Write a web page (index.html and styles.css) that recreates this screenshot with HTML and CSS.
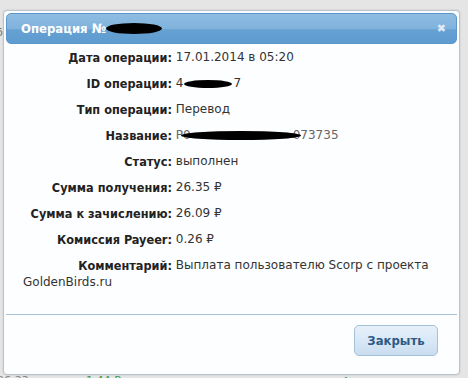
FILE: index.html
```html
<!DOCTYPE html>
<html lang="ru">
<head>
    <meta charset="UTF-8">
    <title>Операция</title>
    <link rel="stylesheet" href="styles.css">
</head>
<body>
    <div class="page">
        <div class="page-edge">б</div>

        <div class="dialog">
            <div class="titlebar">
                <span class="title">Операция №</span><span class="blob blob-title"></span>
                <span class="close">&#10006;</span>
            </div>

            <div class="content">
                <p class="row"><span class="label">Дата операции:</span> 17.01.2014 в 05:20</p>
                <p class="row"><span class="label">ID операции:</span> <span class="masked">4<span class="blob blob-id"></span>7</span></p>
                <p class="row"><span class="label">Тип операции:</span> Перевод</p>
                <p class="row"><span class="label">Название:</span> <span class="masked muted">P0<span class="blob blob-name"></span>073735</span></p>
                <p class="row"><span class="label">Статус:</span> выполнен</p>
                <p class="row"><span class="label">Сумма получения:</span> 26.35 ₽</p>
                <p class="row"><span class="label">Сумма к зачислению:</span> 26.09 ₽</p>
                <p class="row"><span class="label">Комиссия Payeer:</span> 0.26 ₽</p>
                <p class="row"><span class="label">Комментарий:</span> Выплата пользователю Scorp с проекта GoldenBirds.ru</p>
            </div>

            <div class="buttonpane">
                <button class="btn-close">Закрыть</button>
            </div>
        </div>

        <div class="page-row">
            <span class="time">06:23</span>
            <span class="sum">1.44 ₽</span>
            <span class="check">&#10004;</span>
        </div>
    </div>
</body>
</html>
```

FILE: styles.css
```css
* {
    margin: 0;
    padding: 0;
    box-sizing: border-box;
}

body {
    font-family: 'DejaVu Sans', Verdana, sans-serif;
    background: #e5e5e5;
    width: 468px;
    height: 378px;
    overflow: hidden;
}

.page {
    position: relative;
    padding: 10px 8px 0 3px;
}

.page-edge {
    position: absolute;
    left: -4px;
    top: 26px;
    font-size: 11px;
    color: #777;
}

.dialog {
    position: relative;
    width: 457px;
    background: #fdfeff;
    border: 1px solid #b9c3cc;
    border-radius: 4px;
    padding: 2px;
    box-shadow: 0 0 2px rgba(0, 0, 0, 0.15);
}

.titlebar {
    display: flex;
    align-items: center;
    height: 31px;
    padding: 0 10px 0 14px;
    border: 1px solid #5d97c9;
    border-radius: 5px;
    background: linear-gradient(#8fbde2 0%, #80b2dc 50%, #66a1d3 55%, #5e9bd0 100%);
    color: #fff;
}

.title {
    font-family: 'DejaVu Sans Condensed', 'DejaVu Sans', sans-serif;
    font-weight: bold;
    font-size: 13px;
}

.close {
    margin-left: auto;
    font-size: 11px;
    color: #dfeaf5;
}

.blob {
    display: inline-block;
    background: #000;
    border-radius: 50%;
    filter: blur(0.6px);
    vertical-align: middle;
}

.blob-title {
    width: 56px;
    height: 11px;
    margin-left: 0;
}

.blob-id {
    width: 48px;
    height: 8px;
    margin: 0 1px;
}

.blob-name {
    width: 120px;
    height: 9px;
    margin-left: -10px;
    margin-right: -8px;
}

.masked {
    position: relative;
}

.muted {
    color: #666;
}

.content {
    padding: 5px 14px 14px 17px;
    height: 270px;
}

.row {
    font-size: 12px;
    line-height: 17px;
    margin-bottom: 9px;
    color: #333;
}

.label {
    display: inline-block;
    vertical-align: top;
    width: 149px;
    text-align: right;
    white-space: nowrap;
    font-family: 'DejaVu Sans Condensed', 'DejaVu Sans', sans-serif;
    font-weight: bold;
    font-size: 12.6px;
    color: #222;
}

.buttonpane {
    display: flex;
    justify-content: flex-end;
    border-top: 1px solid #a9c3d8;
    padding: 10px 19px 16px 0;
}

.btn-close {
    width: 84px;
    height: 31px;
    border: 1px solid #a5c1d8;
    border-radius: 5px;
    background: linear-gradient(#e6f0fa 0%, #d9e8f6 50%, #c9ddef 100%);
    font-family: 'DejaVu Sans Condensed', 'DejaVu Sans', sans-serif;
    font-weight: bold;
    font-size: 13px;
    color: #2d5a85;
}

.page-row {
    display: flex;
    font-size: 11px;
    line-height: 12px;
    color: #888;
}

.time {
    margin-left: -6px;
    width: 89px;
}

.sum {
    color: #3f9a3f;
    width: 253px;
}

.check {
    color: #3aa33a;
}
```
